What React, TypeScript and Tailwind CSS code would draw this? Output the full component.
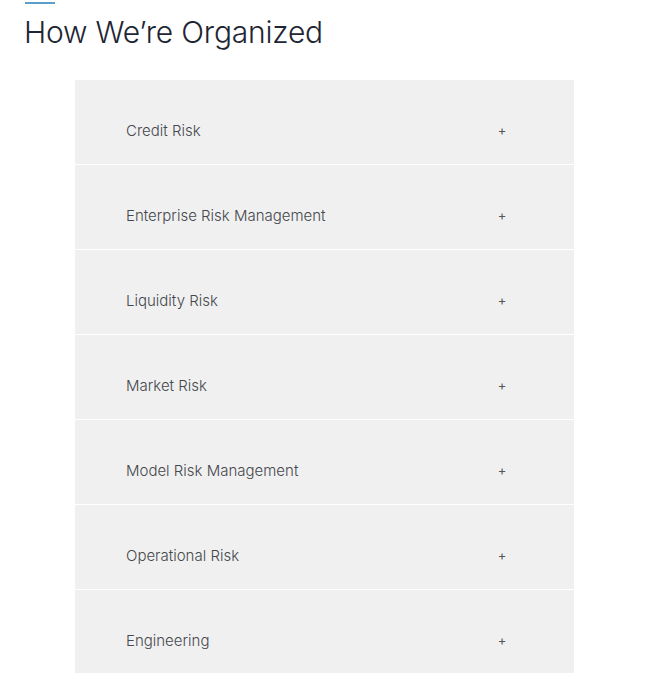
const groups = [
  "Credit Risk",
  "Enterprise Risk Management",
  "Liquidity Risk",
  "Market Risk",
  "Model Risk Management",
  "Operational Risk",
  "Engineering",
];

export default function App() {
  return (
    <div className="min-h-[698px] w-[645px] bg-white pt-[2px] font-['Inter',sans-serif]">
      {/* accent rule + title */}
      <div className="ml-[25px] h-[2px] w-[30px] bg-[#5b9fc8]" />
      <h1 className="ml-[24px] mt-[10px] text-[30px] font-light leading-[36px] tracking-[-0.2px] text-[#1e2633]">
        How We’re Organized
      </h1>

      {/* accordion */}
      <div className="ml-[75px] mt-[30px] w-[499px] bg-[#f0f0f0]">
        {groups.map((name, i) => (
          <div
            key={name}
            className={
              i < groups.length - 1
                ? "flex h-[85px] items-start justify-between border-b border-white pl-[51px] pr-[65px] pt-[41px]"
                : "flex h-[83px] items-start justify-between pl-[51px] pr-[65px] pt-[41px]"
            }
          >
            <span className="text-[15px] font-light leading-[20px] text-[#45484d]">{name}</span>
            <span className="w-[14px] text-center text-[13px] leading-[19px] text-[#555]">+</span>
          </div>
        ))}
      </div>
    </div>
  );
}
